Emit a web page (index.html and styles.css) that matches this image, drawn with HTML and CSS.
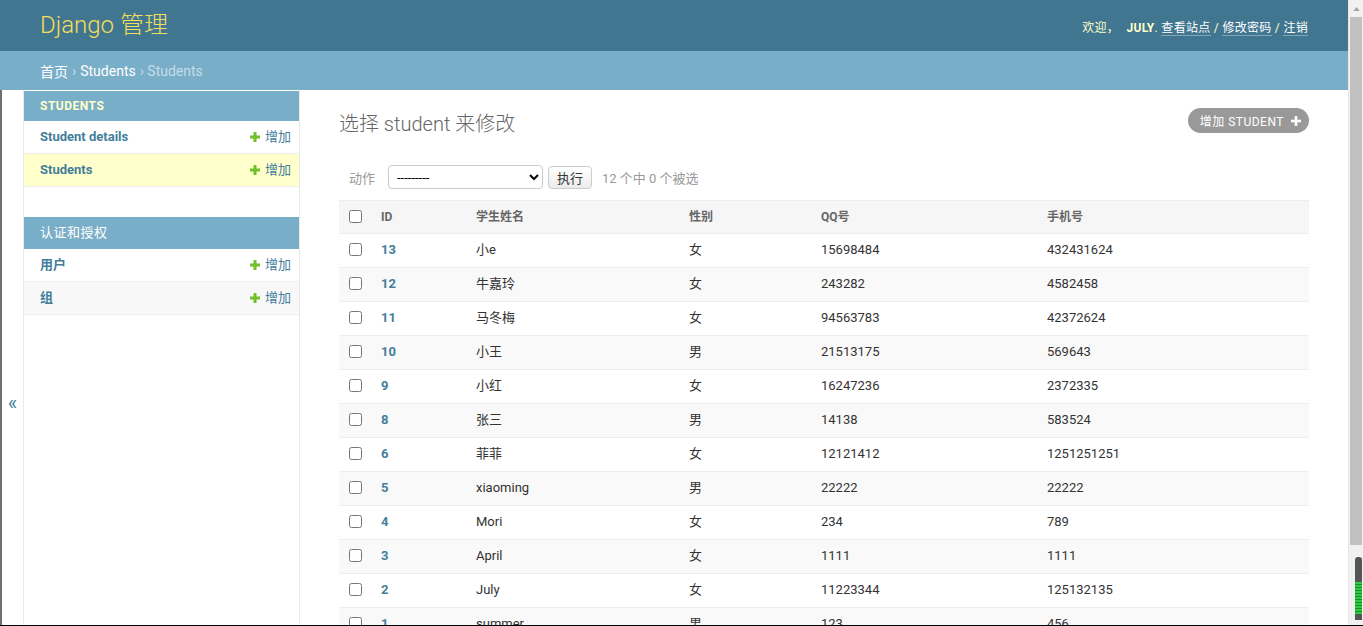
FILE: index.html
```html
<!DOCTYPE html>
<html lang="zh-CN">
<head>
<meta charset="utf-8">
<title>选择 student 来修改 | Django 站点管理员</title>
<link rel="stylesheet" href="styles.css">
</head>
<body>
<div class="page">
  <header class="header">
    <div class="branding">Django 管理</div>
    <div class="user-tools">欢迎， <strong>July</strong>. <a href="#">查看站点</a> / <a href="#">修改密码</a> / <a href="#">注销</a></div>
  </header>
  <div class="breadcrumbs"><a href="#">首页</a> › <a href="#">Students</a> › Students</div>
  <div class="main">
    <button class="toggle-nav">«</button>
    <nav class="sidebar">
      <div class="module">
        <div class="caption current-app">Students</div>
        <div class="nav-row"><a class="model" href="#">Student details</a><a class="addlink" href="#"><svg class="plus" viewBox="0 0 10 10"><rect x="3.5" y="0" width="3" height="10"/><rect x="0" y="3.5" width="10" height="3"/></svg>增加</a></div>
        <div class="nav-row current-model"><a class="model" href="#">Students</a><a class="addlink" href="#"><svg class="plus" viewBox="0 0 10 10"><rect x="3.5" y="0" width="3" height="10"/><rect x="0" y="3.5" width="10" height="3"/></svg>增加</a></div>
      </div>
      <div class="module">
        <div class="caption">认证和授权</div>
        <div class="nav-row"><a class="model" href="#">用户</a><a class="addlink" href="#"><svg class="plus" viewBox="0 0 10 10"><rect x="3.5" y="0" width="3" height="10"/><rect x="0" y="3.5" width="10" height="3"/></svg>增加</a></div>
        <div class="nav-row alt"><a class="model" href="#">组</a><a class="addlink" href="#"><svg class="plus" viewBox="0 0 10 10"><rect x="3.5" y="0" width="3" height="10"/><rect x="0" y="3.5" width="10" height="3"/></svg>增加</a></div>
      </div>
    </nav>
    <div class="content">
      <div class="content-head">
        <h1>选择 student 来修改</h1>
        <a class="object-add" href="#">增加 student <svg class="obj-plus" viewBox="0 0 10 10"><rect x="3.7" y="0" width="2.6" height="10"/><rect x="0" y="3.7" width="10" height="2.6"/></svg></a>
      </div>
      <div class="actions">
        <label class="action-label">动作</label>
        <select class="action-select"><option>---------</option></select>
        <button class="go-btn">执行</button>
        <span class="counter">12 个中 0 个被选</span>
      </div>
      <table class="result-list">
        <colgroup><col class="c-check"><col class="c-id"><col class="c-name"><col class="c-sex"><col class="c-qq"><col class="c-phone"></colgroup>
        <thead>
          <tr><th><input type="checkbox"></th><th>ID</th><th>学生姓名</th><th>性别</th><th>QQ号</th><th>手机号</th></tr>
        </thead>
        <tbody>
          <tr><td><input type="checkbox"></td><td><a href="#">13</a></td><td>小e</td><td>女</td><td>15698484</td><td>432431624</td></tr>
          <tr class="row2"><td><input type="checkbox"></td><td><a href="#">12</a></td><td>牛嘉玲</td><td>女</td><td>243282</td><td>4582458</td></tr>
          <tr><td><input type="checkbox"></td><td><a href="#">11</a></td><td>马冬梅</td><td>女</td><td>94563783</td><td>42372624</td></tr>
          <tr class="row2"><td><input type="checkbox"></td><td><a href="#">10</a></td><td>小王</td><td>男</td><td>21513175</td><td>569643</td></tr>
          <tr><td><input type="checkbox"></td><td><a href="#">9</a></td><td>小红</td><td>女</td><td>16247236</td><td>2372335</td></tr>
          <tr class="row2"><td><input type="checkbox"></td><td><a href="#">8</a></td><td>张三</td><td>男</td><td>14138</td><td>583524</td></tr>
          <tr><td><input type="checkbox"></td><td><a href="#">6</a></td><td>菲菲</td><td>女</td><td>12121412</td><td>1251251251</td></tr>
          <tr class="row2"><td><input type="checkbox"></td><td><a href="#">5</a></td><td>xiaoming</td><td>男</td><td>22222</td><td>22222</td></tr>
          <tr><td><input type="checkbox"></td><td><a href="#">4</a></td><td>Mori</td><td>女</td><td>234</td><td>789</td></tr>
          <tr class="row2"><td><input type="checkbox"></td><td><a href="#">3</a></td><td>April</td><td>女</td><td>1111</td><td>1111</td></tr>
          <tr><td><input type="checkbox"></td><td><a href="#">2</a></td><td>July</td><td>女</td><td>11223344</td><td>125132135</td></tr>
          <tr class="row2"><td><input type="checkbox"></td><td><a href="#">1</a></td><td>summer</td><td>男</td><td>123</td><td>456</td></tr>
        </tbody>
      </table>
    </div>
  </div>
</div>
<div class="scrollbar">
  <div class="sb-arrow"><svg viewBox="0 0 8 5" class="sb-tri"><polygon points="0,5 4,0 8,5"/></svg></div>
  <div class="sb-track"><div class="sb-thumb"></div></div>
</div>
<div class="meter"><div class="meter-fill"></div></div>
<div class="bottom-edge"></div>
</body>
</html>
```
FILE: styles.css
```css
html, body {
  margin: 0;
  padding: 0;
  height: 100%;
  overflow: hidden;
}
body {
  display: flex;
  font-family: Roboto, "Noto Sans CJK SC", sans-serif;
  font-size: 14px;
  color: #333;
  background: #fff;
}
a { text-decoration: none; }

.page {
  flex: 1;
  min-width: 0;
  display: flex;
  flex-direction: column;
}

/* header */
.header {
  flex: none;
  height: 51px;
  box-sizing: border-box;
  background: #417690;
  padding: 0 40px;
  display: flex;
  align-items: center;
  justify-content: space-between;
}
.branding {
  font-size: 24px;
  font-weight: 300;
  color: #f5dd5d;
  line-height: 28px;
  margin-top: -1px;
}
.user-tools {
  font-size: 12px;
  color: #ffc;
  letter-spacing: 0.3px;
  text-transform: uppercase;
  margin-top: 2px;
}
.user-tools strong { font-weight: 700; margin-left: 4px; }
.user-tools a {
  color: #fff;
  border-bottom: 1px solid rgba(255,255,255,0.35);
}

/* breadcrumbs */
.breadcrumbs {
  flex: none;
  height: 39px;
  box-sizing: border-box;
  background: #79aec8;
  padding: 0 40px;
  display: flex;
  align-items: center;
  gap: 4px;
  color: #c4dce8;
  font-size: 14px;
}
.breadcrumbs a { color: #fff; }

/* main */
.main {
  flex: none;
  display: flex;
  align-items: flex-start;
}
.toggle-nav {
  flex: none;
  width: 24px;
  height: 626px;
  box-sizing: border-box;
  border: 0;
  border-left: 2px solid #6f6f6f;
  border-right: 1px solid #eaeaea;
  background: #fff;
  color: #447e9b;
  font-size: 20px;
  padding: 0;
  font-family: Roboto, sans-serif;
  display: flex;
  align-items: center;
  justify-content: center;
}
.sidebar {
  flex: none;
  width: 276px;
  box-sizing: border-box;
  border-right: 1px solid #eaeaea;
  padding-top: 1px;
  align-self: stretch;
}
.module { margin-bottom: 30px; }
.caption {
  background: #79aec8;
  color: #fff;
  font-size: 13px;
  line-height: 16px;
  padding: 8px 16px;
  letter-spacing: 0.5px;
}
.caption.current-app {
  color: #ffc;
  font-weight: 700;
  text-transform: uppercase;
  font-size: 12px;
  line-height: 15px;
  padding: 8px 16px 7px;
}
.nav-row {
  display: flex;
  align-items: center;
  justify-content: space-between;
  padding: 8px 8px 8px 16px;
  line-height: 16px;
  border-bottom: 1px solid #eee;
  font-size: 13px;
}
.nav-row.current-model { background: #ffc; }
.nav-row.alt { background: #f8f8f8; }
.model { color: #447e9b; font-weight: 700; }
.addlink {
  color: #447e9b;
  display: flex;
  align-items: center;
  gap: 5px;
}
.plus { width: 10px; height: 10px; fill: #70bf2b; }

/* content */
.content {
  flex: 1;
  min-width: 0;
  padding: 18px 39px 0 39px;
}
.content-head {
  display: flex;
  justify-content: space-between;
  align-items: flex-start;
}
h1 {
  margin: 3px 0 0;
  font-size: 20px;
  font-weight: 300;
  color: #666;
  line-height: 26px;
}
.object-add {
  background: #999;
  color: #fff;
  border-radius: 15px;
  font-size: 12px;
  letter-spacing: 0.5px;
  text-transform: uppercase;
  height: 25px;
  box-sizing: border-box;
  padding: 0 8px 0 12px;
  display: flex;
  align-items: center;
  gap: 7px;
}
.obj-plus { width: 10px; height: 10px; fill: #fff; }

.actions {
  display: flex;
  align-items: center;
  height: 24px;
  margin-top: 28px;
  padding: 0 10px;
  font-size: 13px;
  color: #999;
}
.action-label { color: #999; margin-right: 13px; }
.action-select {
  width: 155px;
  height: 24px;
  border: 1px solid #ccc;
  border-radius: 4px;
  background: #fff;
  font-size: 13px;
  color: #000;
  padding: 0 4px;
  font-family: Roboto, sans-serif;
}
.go-btn {
  margin-left: 5px;
  height: 23px;
  width: 44px;
  border: 1px solid #ccc;
  border-radius: 4px;
  background: linear-gradient(#fff, #ececec);
  font-size: 13px;
  color: #333;
  font-family: "Noto Sans CJK SC", sans-serif;
  padding: 0;
}
.counter { margin-left: 10px; }

.result-list {
  margin-top: 11px;
  width: 100%;
  border-collapse: collapse;
  table-layout: fixed;
}
.c-check { width: 32px; }
.c-id { width: 95px; }
.c-name { width: 213px; }
.c-sex { width: 132px; }
.c-qq { width: 226px; }
.result-list th {
  background: #f6f6f6;
  color: #666;
  font-size: 12px;
  font-weight: 700;
  text-align: left;
  padding: 8px 10px;
  line-height: 16px;
  border-top: 1px solid #eee;
  border-bottom: 1px solid #eee;
  white-space: nowrap;
}
.result-list td {
  font-size: 13px;
  padding: 7px 10px 9px;
  line-height: 17px;
  border-bottom: 1px solid #eee;
  color: #333;
  white-space: nowrap;
}
.result-list th:first-child, .result-list td:first-child { padding-right: 0; }
.result-list input[type=checkbox] {
  margin: 0;
  width: 13px;
  height: 13px;
  vertical-align: -2px;
}
.result-list td a { color: #447e9b; font-weight: 700; }
.result-list tr.row2 td { background: #f9f9f9; }

/* fake browser scrollbar */
.scrollbar {
  flex: none;
  width: 15px;
  background: #f1f1f1;
  border-left: 1px solid #e8e8e8;
  box-sizing: border-box;
  display: flex;
  flex-direction: column;
}
.sb-arrow {
  height: 17px;
  display: flex;
  align-items: center;
  justify-content: center;
}
.sb-tri { width: 7px; height: 4px; fill: #a3a3a3; }
.sb-track { flex: 1; padding: 0 1px 0 1px; }
.sb-thumb { height: 528px; background: #c1c1c1; }

.meter {
  position: fixed;
  right: 1px;
  top: 557px;
  width: 7px;
  height: 63px;
  background: #555;
  border-radius: 3px 3px 0 0;
}
.meter-fill {
  margin-top: 25px;
  height: 32px;
  background: repeating-linear-gradient(#2ecc40 0 2px, #1a8a2a 2px 3px);
}
.bottom-edge {
  position: fixed;
  left: 0;
  right: 0;
  bottom: 0;
  height: 1px;
  background: #000;
}
```
